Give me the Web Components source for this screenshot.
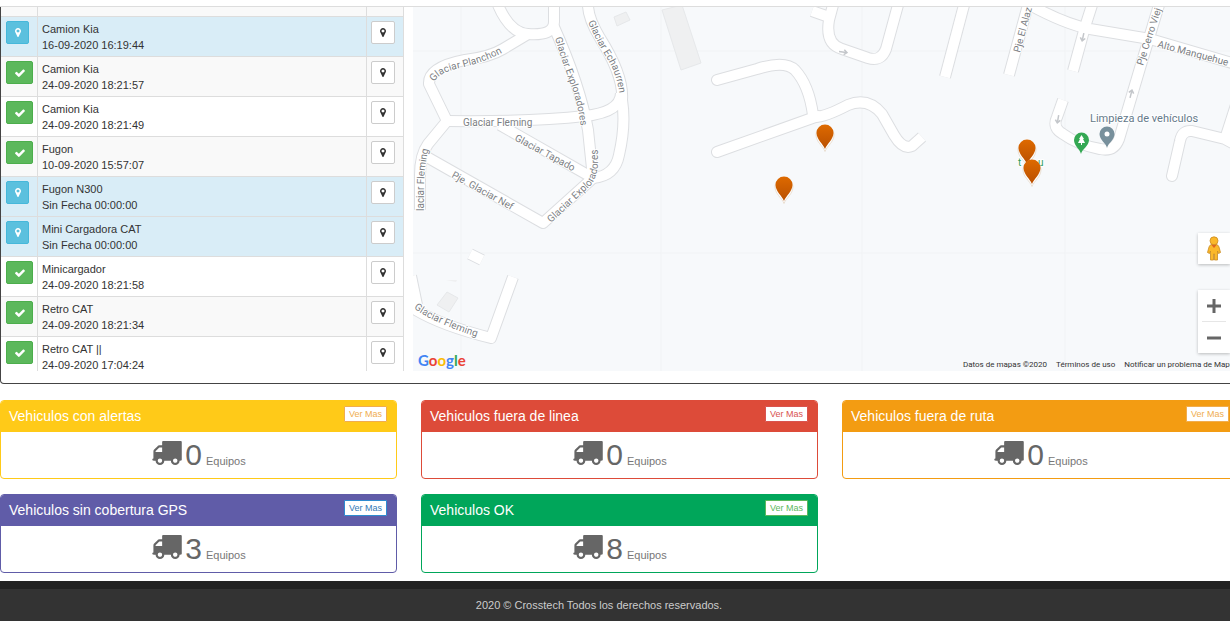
<!DOCTYPE html>
<html lang="es">
<head>
<meta charset="utf-8">
<title>Crosstech</title>
<style>
  body { margin: 0; background: #fff; font: 11px/16px "Liberation Sans", Arial, sans-serif; color: #333; overflow: hidden; }
</style>
</head>
<body>
<fleet-app></fleet-app>

<template id="t-app">
  <style>
    :host { display: flex; flex-direction: column; min-height: 100vh; }
    .top { height: 6px; border-bottom: 1px solid #ddd; }
    main { margin-right: -9px; flex: none; }
    .panel {
      display: grid; grid-template-columns: minmax(0, 403fr) minmax(0, 817fr); column-gap: 9px;
      padding: 0 8px 12px 0; border: 1px solid #444; border-top: 0; border-radius: 0 0 4px 4px;
    }
    .cards { display: grid; grid-template-columns: repeat(3, minmax(0, 1fr)); gap: 15px 24px; padding: 16px 0 8px; }
  </style>
  <div class="top"></div>
  <main>
    <section class="panel">
      <vehicle-list></vehicle-list>
      <fleet-map></fleet-map>
    </section>
    <section class="cards">
      <stat-card count="0" style="--tone:#ffca18;--link:#f0ad4e;--edge:#f0ad4e">Vehiculos con alertas</stat-card>
      <stat-card count="0" style="--tone:#dd4b39;--link:#d9534f;--edge:#d9534f">Vehiculos fuera de linea</stat-card>
      <stat-card count="0" style="--tone:#f39c12;--link:#f0ad4e;--edge:#f0ad4e">Vehiculos fuera de ruta</stat-card>
      <stat-card count="3" style="--tone:#605ca8;--link:#337ab7;--edge:#2e8bd0">Vehiculos sin cobertura GPS</stat-card>
      <stat-card count="8" style="--tone:#00a65a;--link:#5cb85c;--edge:#5cb85c">Vehiculos OK</stat-card>
    </section>
  </main>
  <page-footer>2020 © Crosstech Todos los derechos reservados.</page-footer>
</template>

<template id="t-list">
  <style>
    :host { display: block; height: 364px; overflow: hidden; }
    table { width: 100%; table-layout: fixed; border-collapse: separate; border-spacing: 0; }
    td { box-sizing: border-box; height: 40px; padding: 4px 4px 3px; border: solid #ddd; border-width: 0 1px 1px 0; vertical-align: top; line-height: 16px; }
    td:first-child { width: 37px; padding-left: 5px; }
    td:last-child { width: 37px; }
    tr:nth-child(odd) td { background: #f9f9f9; }
    tr.info td { background: #d9edf7; }
    tr.cut td { height: 10px; padding: 0; }
    button {
      display: flex; align-items: center; justify-content: center; box-sizing: border-box;
      width: 24px; height: 23px; padding: 0; border: 1px solid #ccc; border-radius: 2px; background: #fff; color: #333;
    }
    .ok { width: 27px; background: #5cb85c; border-color: #4cae4c; color: #fff; }
    .pin { width: 23px; background: #5bc0de; border-color: #46b8da; color: #fff; }
  </style>
  <table><tbody></tbody></table>
</template>

<template id="t-card">
  <style>
    :host { display: block; box-sizing: border-box; border: 1px solid var(--tone); border-radius: 4px; overflow: hidden; background: #fff; }
    header { display: flex; justify-content: space-between; align-items: flex-start; padding: 5px 9px 5px 8px; background: var(--tone); color: #fff; }
    h3 { margin: 0; font-size: 14px; font-weight: 400; line-height: 21px; }
    button { box-sizing: border-box; height: 16px; padding: 0 4px; border: 1px solid var(--edge); border-radius: 1px; background: #fff; color: var(--link); font: 9px/14px "Liberation Sans", Arial, sans-serif; }
    .body { display: flex; align-items: baseline; justify-content: center; height: 46px; color: #666; }
    svg { width: 31px; height: 24px; fill: currentColor; margin-right: 3px; }
    b { font-size: 30px; font-weight: 400; line-height: 46px; margin-right: 4px; }
    span { color: #777; }
  </style>
  <header><h3><slot></slot></h3><button type="button">Ver Mas</button></header>
  <div class="body">
    <svg viewBox="0 256 1792 1408" aria-hidden="true"><path d="M640 1408q0-52-38-90t-90-38-90 38-38 90 38 90 90 38 90-38 38-90zm-384-512h384v-256h-158q-13 0-22 9l-195 195q-9 9-9 22v30zm1280 512q0-52-38-90t-90-38-90 38-38 90 38 90 90 38 90-38 38-90zm256-1088v1024q0 15-4 26.5t-13.5 18.5-16.5 11.5-23.5 6-22.5 2-25.5 0-22.5-.5q0 106-75 181t-181 75-181-75-75-181h-384q0 106-75 181t-181 75-181-75-75-181h-64q-3 0-22.5.5t-25.5 0-22.5-2-23.5-6-16.5-11.5-13.5-18.5-4-26.5q0-26 19-45t45-19v-320q0-8-.5-35t0-38 2.5-34.5 6.5-37 14-30.5 22.5-30l198-198q19-19 50.5-32t58.5-13h160v-192q0-26 19-45t45-19h1024q26 0 45 19t19 45z"/></svg>
    <b></b><span>Equipos</span>
  </div>
</template>

<template id="t-footer">
  <style>
    :host { display: block; flex: 1 0 auto; box-sizing: border-box; border-top: 8px solid #222; background: #333; padding: 8px 32px 8px 0; text-align: center; color: #ccc; }
  </style>
  <slot></slot>
</template>

<template id="t-map">
  <style>
    :host { display: block; position: relative; height: 364px; overflow: hidden; background: #f7f9fb; }
    .canvas { display: block; width: 100%; height: 100%; }
    .casing { fill: none; stroke: #dcdee1; stroke-width: 12; stroke-linejoin: round; }
    .road { fill: none; stroke: #fff; stroke-width: 10; stroke-linejoin: round; }
    .round { stroke-linecap: round; }
    .labels { font: 10px Roboto, "Liberation Sans", sans-serif; fill: #7c8084; paint-order: stroke; stroke: #fff; stroke-width: 2px; stroke-linejoin: round; }
    .ctl { position: absolute; right: 0; width: 32px; background: #fff; box-shadow: 0 1px 3px rgba(0,0,0,.25); }
    .man { bottom: 107px; height: 31px; }
    .zoom { bottom: 18px; }
    button { display: flex; align-items: center; justify-content: center; width: 32px; height: 31px; padding: 0; border: 0; background: none; }
    hr { margin: 0 4px; border: 0; border-top: 1px solid #e6e6e6; }
    .logo { position: absolute; left: 5px; bottom: 0; font: 700 15px/22px Lato, sans-serif; text-decoration: none; color: #4285f4; }
    .logo .r { color: #ea4335; } .logo .y { color: #fbbc05; } .logo .g { color: #34a853; }
    .legal { position: absolute; right: -4px; bottom: 0; display: flex; gap: 9px; font: 8px/12px Roboto, sans-serif; color: #333; white-space: nowrap; }
    .legal a { color: inherit; text-decoration: none; }
  </style>
  <svg class="canvas" viewBox="413 7 817 364" preserveAspectRatio="xMinYMin slice" role="img" aria-label="Mapa">
    <defs>
      <g id="pin">
        <path d="M0 14.500C-2 9-9 5-9 -2.500A9 9 0 0 1 9 -2.500C9 5 2 9 0 14.500Z" fill="#fff" stroke="#eadfd2" stroke-width="1" transform="translate(0 1)"/>
        <path d="M0 13C-2 8-8.500 3-8.500 -3A8.500 8.500 0 0 1 8.500 -3C8.500 3 2 8 0 13Z" fill="url(#rust)"/>
      </g>
      <linearGradient id="rust" x1="0" y1="0" x2="0" y2="1"><stop offset="0" stop-color="#de6a00"/><stop offset="1" stop-color="#b94f00"/></linearGradient>
      <path id="arrow" d="M-4 0H3M1 -2.500L4 0L1 2.500" fill="none" stroke="#c3c6ca" stroke-width="1.500"/>
      <path id="l-planchon" d="M434 82Q440 72 460 68Q490 61 508 49"/>
      <path id="l-explora" d="M555 38Q562 62 571 85Q579 108 582 135"/>
      <path id="l-echaurren" d="M588 22Q596 41 608 60Q618 76 620 100"/>
      <path id="l-adores" d="M551 223L587 189Q598 180 598 160V135"/>
      <path id="l-left" d="M424 211V185Q424 165 431 138"/>
      <path id="l-low" d="M414 308Q430 322 486 340"/>
      <g id="streets">
        <path d="M498 5Q510 33 528 34Q554 36 554 22V5"/>
        <path d="M528 34L503 49Q490 57 465 60Q428 67 429 84L447 121L428 144Q420 155 420 175V210"/>
        <path d="M447 121Q530 122 585 116Q621 112 621 93"/>
        <path d="M588 5Q588 18 600 38Q624 76 622 100Q626 125 619 155Q615 176 593 178"/>
        <path d="M554 27Q580 85 588 130L593 178L543 223L425 156"/>
        <path d="M500 125L593 178"/>
        <path d="M470 254L482 260"/>
        <path d="M411 276L417 305"/>
        <path d="M408 305Q435 324 491 338L513 277"/>
        <path class="round" d="M717 80L757 69Q785 60 795 70Q809 85 813 115"/>
        <path class="round" d="M717 152L818 116"/>
        <path d="M815 117Q825 117 848 105Q868 97 882 114L894 135Q903 150 912 146L922 137"/>
        <path d="M833 5L829 20Q825 44 842 49L868 58Q881 62 886 49L898 5"/>
        <path d="M812 11L829 17"/>
        <path d="M964 5L945 77"/>
        <path d="M1028 5L1009 75"/>
        <path d="M1030 5Q1065 24 1090 29L1150 39L1232 63"/>
        <path d="M1092 5L1085 27L1073 71"/>
        <path d="M1159 5L1140 68L1119 139Q1114 152 1100 149Q1078 145 1063 134Q1052 128 1057 117L1063 100"/>
        <path class="round" d="M1172 176L1180 141Q1182 130 1192 131L1225 139L1236 145"/>
        <path d="M1225 139L1236 105"/>
      </g>
    </defs>
    <g stroke="#f1f3f5"><path d="M413 51H1230M413 253H1230M461 7V371M661 7V371M862 7V371M1065 7V371"/></g>
    <g fill="#eff0f1" stroke="#e6e8ea">
      <path d="M614 17L626 12L630 20L617 26Z"/><path d="M662 10L682 5L701 63L681 70Z"/>
      <path d="M447 292L458 298L449 312L437 305Z"/><path d="M446 280H457L456 282Z" stroke="none"/>
    </g>
    <use href="#streets" class="casing"/>
    <use href="#streets" class="road"/>
    <use href="#arrow" transform="translate(843 52) rotate(8)"/>
    <use href="#arrow" transform="translate(1083 37) rotate(102)"/>
    <use href="#arrow" transform="translate(1131 94) rotate(-76)"/>
    <use href="#arrow" transform="translate(1058 119) rotate(100)"/>
    <g class="labels">
      <text><textPath href="#l-planchon">Glaciar Planchon</textPath></text>
      <text><textPath href="#l-explora">Glaciar Exploradores</textPath></text>
      <text><textPath href="#l-echaurren">Glaciar Echaurren</textPath></text>
      <text><textPath href="#l-adores">Glaciar Exploradores</textPath></text>
      <text><textPath href="#l-left">laciar Fleming</textPath></text>
      <text><textPath href="#l-low">Glaciar Fleming</textPath></text>
      <text x="463" y="126">Glaciar Fleming</text>
      <text transform="translate(514 140) rotate(28)">Glaciar Tapado</text>
      <text transform="translate(451 177) rotate(29)">Pje. Glaciar Nef</text>
      <text transform="translate(1020 53) rotate(-75)">Pje El Alaz</text>
      <text transform="translate(1143 66) rotate(-72)">Pje Cerro Viej</text>
      <text transform="translate(1157 47) rotate(15)">Alto Manquehue</text>
      <text x="1090" y="122" style="font-size:11px;fill:#64798a">Limpieza de vehículos</text>
      <text x="1018" y="166" style="fill:#2c9c5a">t</text>
      <text x="1038" y="166" style="fill:#2c9c5a">u</text>
    </g>
    <path d="M1081 154C1080 149 1074 146 1074 140A7.500 7.500 0 0 1 1089 140C1089 146 1082 149 1081 154Z" fill="#34a853"/>
    <path d="M1081.500 135L1084 139H1083L1085 143H1082V145H1081V143H1078L1080 139H1079Z" fill="#fff"/>
    <path d="M1107 148C1106 143 1099.500 140 1099.500 134A7.500 7.500 0 0 1 1114.500 134C1114.500 140 1108 143 1107 148Z" fill="#78909c"/>
    <circle cx="1107" cy="134" r="2.500" fill="#fff"/>
    <use href="#pin" x="825" y="136"/>
    <use href="#pin" x="784" y="188"/>
    <use href="#pin" x="1027" y="151"/>
    <use href="#pin" x="1032" y="171"/>
  </svg>
  <a class="logo" href="#" aria-label="Google">G<span class="r">o</span><span class="y">o</span>g<span class="g">l</span><span class="r">e</span></a>
  <div class="ctl man"><button type="button" aria-label="Street View">
    <svg width="14" height="25" viewBox="0 0 14 25"><path d="M4.500 8.500H9.500Q11.500 9 12 11L13.500 16.500L11.500 17.500L10.500 15V24H7.500V18H6.500V24H3.500V15L2.500 17.500L.5 16.500L2 11Q2.500 9 4.500 8.500Z" fill="#fbb829" stroke="#c98a22" stroke-width=".8"/><path d="M4 8.500H10L7 12Z" fill="#e0651f"/><circle cx="7" cy="4.800" r="4" fill="#fbb829" stroke="#c98a22" stroke-width=".8"/></svg>
  </button></div>
  <div class="ctl zoom">
    <button type="button" aria-label="Acercar"><svg width="14" height="14"><path d="M0 7H14M7 0V14" stroke="#666" stroke-width="3"/></svg></button>
    <hr>
    <button type="button" aria-label="Alejar"><svg width="14" height="14"><path d="M0 7H14" stroke="#666" stroke-width="3"/></svg></button>
  </div>
  <div class="legal"><span>Datos de mapas ©2020</span><a href="#">Términos de uso</a><a href="#">Notificar un problema de Maps</a></div>
</template>

<script>
  class TemplateElement extends HTMLElement {
    constructor() {
      super();
      this.attachShadow({ mode: "open" })
        .append(document.getElementById(this.constructor.template).content.cloneNode(true));
    }
  }

  const MARKER = '<svg width="6" height="9" viewBox="384 128 1024 1536" fill="currentColor"><path d="M1152 640q0-106-75-181t-181-75-181 75-75 181 75 181 181 75 181-75 75-181zm256 0q0 109-33 179l-364 774q-16 33-47.500 52t-67.500 19-67.500-19-46.500-52l-365-774q-33-70-33-179 0-212 150-362t362-150 362 150 150 362z"/></svg>';
  const CHECK = '<svg width="10" height="8" viewBox="121 270 1550 1252" fill="currentColor"><path d="M1671 566q0 40-28 68l-724 724-136 136q-28 28-68 28t-68-28l-136-136-362-362q-28-28-28-68t28-68l136-136q28-28 68-28t68 28l294 295 656-657q28-28 68-28t68 28l136 136q28 28 28 68z"/></svg>';
  const VEHICLES = [
    ["Camion Kia", "16-09-2020 16:19:44", false],
    ["Camion Kia", "24-09-2020 18:21:57", true],
    ["Camion Kia", "24-09-2020 18:21:49", true],
    ["Fugon", "10-09-2020 15:57:07", true],
    ["Fugon N300", "Sin Fecha 00:00:00", false],
    ["Mini Cargadora CAT", "Sin Fecha 00:00:00", false],
    ["Minicargador", "24-09-2020 18:21:58", true],
    ["Retro CAT", "24-09-2020 18:21:34", true],
    ["Retro CAT ||", "24-09-2020 17:04:24", true]
  ];

  customElements.define("vehicle-list", class extends TemplateElement {
    static template = "t-list";
    connectedCallback() {
      const rows = VEHICLES.map(([name, date, ok]) => `
        <tr class="${ok ? "" : "info"}">
          <td><button type="button" class="${ok ? "ok" : "pin"}" aria-label="Estado">${ok ? CHECK : MARKER}</button></td>
          <td>${name}<br>${date}</td>
          <td><button type="button" aria-label="Ubicar">${MARKER}</button></td>
        </tr>`);
      this.shadowRoot.querySelector("tbody").innerHTML =
        '<tr class="cut"><td></td><td></td><td></td></tr>' + rows.join("");
    }
  });
  customElements.define("stat-card", class extends TemplateElement {
    static template = "t-card";
    connectedCallback() {
      this.shadowRoot.querySelector("b").textContent = this.getAttribute("count");
    }
  });
  customElements.define("fleet-map", class extends TemplateElement { static template = "t-map"; });
  customElements.define("page-footer", class extends TemplateElement { static template = "t-footer"; });
  customElements.define("fleet-app", class extends TemplateElement { static template = "t-app"; });
</script>
</body>
</html>
